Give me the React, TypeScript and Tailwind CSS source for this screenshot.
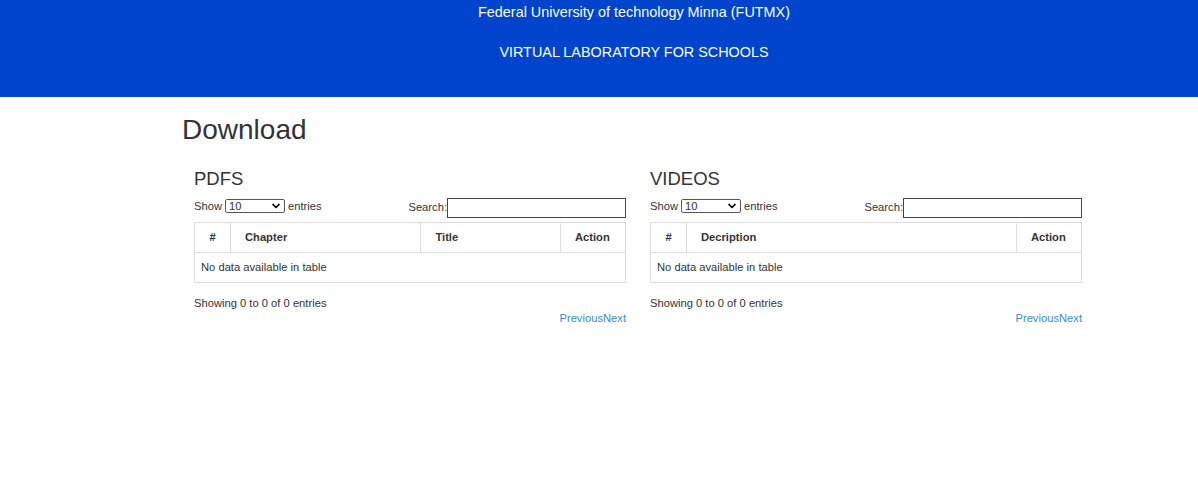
import { ChevronDown } from 'lucide-react'

interface Column {
  label: string
  w: string
  center?: boolean
}

interface Props {
  title: string
  columns: Column[]
}

const font = { fontFamily: '"Liberation Sans", Arial, sans-serif' }

function DataPanel({ title, columns }: Props) {
  return (
    <div className="flex flex-col px-3">
      <h4 className="text-[18.5px] leading-[20px] text-[#333] mt-[72px]">{title}</h4>
      <div className="flex items-start justify-between mt-[9px] h-[24px] text-[11.2px] text-[#333]">
        <div className="flex items-center gap-[3px]">
          <span>Show</span>
          <div className="flex items-center justify-between w-[60px] h-[14px] border border-[#555] rounded-[2px] pl-[3px] pr-[2px] leading-none">
            <span>10</span>
            <ChevronDown size={12} strokeWidth={3.5} className="text-black" />
          </div>
          <span>entries</span>
        </div>
        <div className="flex items-end">
          <span className="mb-[2px]">Search:</span>
          <div className="w-[179px] h-[20px] border border-[#444] bg-white" />
        </div>
      </div>
      <table className="w-full border-collapse border border-[#ddd] text-[11.2px] text-[#333]">
        <thead>
          <tr className="h-[30px]">
            {columns.map((c) => (
              <th
                key={c.label}
                className={`${c.w} border border-[#ddd] font-bold px-[14px] ${c.center ? 'text-center' : 'text-left'}`}>
                {c.label}
              </th>
            ))}
          </tr>
        </thead>
        <tbody>
          <tr className="h-[30px]">
            <td colSpan={columns.length} className="border border-[#ddd] pl-[6px]">
              No data available in table
            </td>
          </tr>
        </tbody>
      </table>
      <div className="mt-[13px] text-[11.2px] leading-[14px] text-[#333]">Showing 0 to 0 of 0 entries</div>
      <div className="flex justify-end mt-[1px] text-[11.2px] leading-[14px] text-[#428bca]">
        <span>Previous</span>
        <span>Next</span>
      </div>
    </div>
  )
}

export default function App() {
  return (
    <div className="min-h-[492px] bg-white" style={font}>
      <header className="h-[97px] bg-[#0044cc] text-white text-[14.4px] leading-[20px] text-center pt-[2px] pl-[70px]">
        <p>Federal University of technology Minna (FUTMX)</p>
        <p className="mt-[20px]">VIRTUAL LABORATORY FOR SCHOOLS</p>
      </header>
      <div className="ml-[182px] w-[912px]">
        <h2 className="text-[28px] leading-[32px] text-[#333] pt-[17px] -mb-[49px]">Download</h2>
        <div className="grid grid-cols-2">
          <DataPanel
            title="PDFS"
            columns={[
              { label: '#', w: 'w-[36px]', center: true },
              { label: 'Chapter', w: 'w-[191px]' },
              { label: 'Title', w: 'w-[140px]' },
              { label: 'Action', w: 'w-[65px]' },
            ]}
          />
          <DataPanel
            title="VIDEOS"
            columns={[
              { label: '#', w: 'w-[36px]', center: true },
              { label: 'Decription', w: 'w-[331px]' },
              { label: 'Action', w: 'w-[65px]' },
            ]}
          />
        </div>
      </div>
    </div>
  )
}
